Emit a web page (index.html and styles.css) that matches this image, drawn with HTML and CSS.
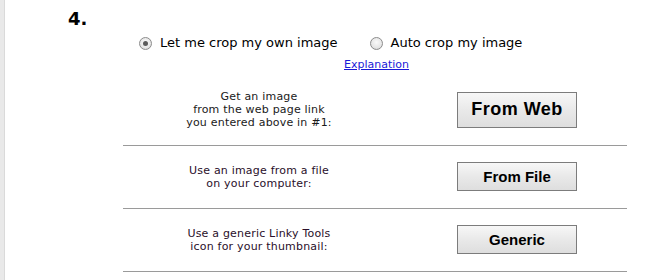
FILE: index.html
```html
<!DOCTYPE html>
<html>
<head>
<meta charset="utf-8">
<link rel="stylesheet" href="styles.css">
</head>
<body>
<div class="page">
  <div class="strip"></div>
  <div class="main">
    <div class="step">4.</div>
    <div class="options">
      <label class="opt"><input type="radio" name="crop" class="radio" checked><span>Let me crop my own image</span></label>
      <label class="opt opt2"><input type="radio" name="crop" class="radio"><span>Auto crop my image</span></label>
    </div>
    <div class="explain"><a href="#">Explanation</a></div>
    <div class="rows">
      <div class="row row-first">
        <div class="desc">Get an image<br>from the web page link<br>you entered above in #1:</div>
        <div class="act"><button class="btn btn-big">From Web</button></div>
      </div>
      <div class="row">
        <div class="desc purple">Use an image from a file<br>on your computer:</div>
        <div class="act"><button class="btn">From File</button></div>
      </div>
      <div class="row">
        <div class="desc purple">Use a generic Linky Tools<br>icon for your thumbnail:</div>
        <div class="act"><button class="btn">Generic</button></div>
      </div>
    </div>
  </div>
</div>
</body>
</html>
```

FILE: styles.css
```css
html, body {
  margin: 0;
  padding: 0;
  background: #ffffff;
}
body {
  font-family: "DejaVu Sans", Verdana, sans-serif;
  color: #111;
}
.page {
  display: flex;
  min-height: 280px;
}
.strip {
  width: 4px;
  background: #e9e9e9;
  border-right: 1px solid #dadada;
  flex: none;
}
.main {
  flex: 1;
  padding-left: 63px;
}
.step {
  font-weight: bold;
  font-size: 18px;
  line-height: 20px;
  padding-top: 9px;
  color: #000;
}
.options {
  display: flex;
  align-items: center;
  margin-left: 71px;
  margin-top: 6px;
  font-size: 13px;
  line-height: 16px;
  color: #000;
}
.opt {
  display: flex;
  align-items: center;
}
.opt2 {
  margin-left: 32px;
}
.radio {
  appearance: none;
  -webkit-appearance: none;
  margin: 0 8px 0 0;
  width: 13px;
  height: 13px;
  border-radius: 50%;
  border: 1px solid #8c8c8c;
  box-sizing: border-box;
  background: radial-gradient(circle at 50% 40%, #fafafa 0%, #e6e6e6 60%, #cfcfcf 100%);
  position: relative;
}
.radio:checked::after {
  content: "";
  position: absolute;
  left: 3px;
  top: 3px;
  width: 5px;
  height: 5px;
  border-radius: 50%;
  background: #5a5a5a;
}
.explain {
  margin-top: 7px;
  margin-left: 276px;
  font-size: 11px;
  line-height: 14px;
}
.explain a {
  color: #1a1ad8;
  text-decoration: underline;
}
.rows {
  margin-left: 55px;
  width: 504px;
  margin-top: 7px;
}
.row {
  display: grid;
  grid-template-columns: 272px 1fr;
  align-items: center;
  padding: 16px 0 17px;
  border-bottom: 1px solid #9a9a9a;
}
.row-first {
  padding: 11px 0 16px;
}
.desc {
  text-align: center;
  font-size: 11px;
  line-height: 13px;
  letter-spacing: 0.2px;
  color: #1a1a1a;
}
.desc.purple {
  color: #2a0f2a;
}
.act {
  padding-left: 62px;
  display: flex;
}
.btn {
  width: 120px;
  height: 29px;
  border: 1px solid #7c7c7c;
  background: linear-gradient(#f7f7f7, #e9e9e9 50%, #dedede);
  font-family: "Liberation Sans", Arial, sans-serif;
  font-weight: bold;
  font-size: 15px;
  color: #000;
  padding: 0;
  margin: 0;
  border-radius: 0;
}
.btn-big {
  height: 36px;
  font-size: 18px;
  letter-spacing: 0.5px;
}
```
